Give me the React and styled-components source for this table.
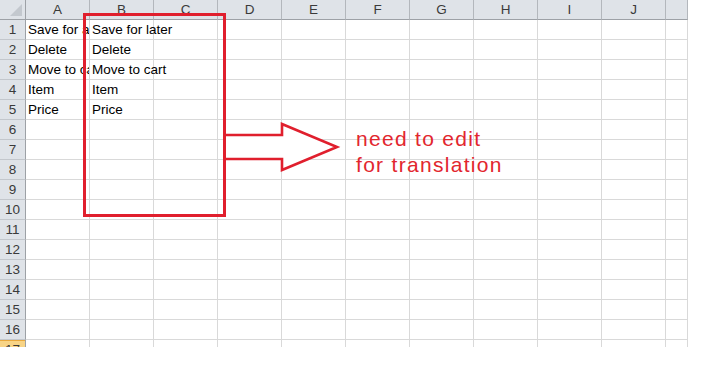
import React from 'react';
import styled, { createGlobalStyle } from 'styled-components';

const GlobalStyle = createGlobalStyle`
  html, body {
    margin: 0;
    background: #ffffff;
    font-family: "Liberation Sans", Arial, sans-serif;
  }
`;

const Page = styled.div`
  position: relative;
  width: 712px;
  height: 365px;
  overflow: hidden;
  background: #fff;
`;

const Sheet = styled.div`
  display: grid;
  grid-template-columns: 26px repeat(10, 64px) 22px;
  grid-auto-rows: 20px;
  width: 688px;
  height: 347px;
  overflow: hidden;
`;

const Corner = styled.div`
  position: relative;
  background: #dfe3e8;
  border-right: 1px solid #9da1a6;
  border-bottom: 1px solid #9da1a6;
  box-sizing: border-box;

  /* little select-all triangle */
  &::after {
    content: '';
    position: absolute;
    right: 3px;
    bottom: 3px;
    width: 0;
    height: 0;
    border-left: 12px solid transparent;
    border-bottom: 12px solid #c3c8ce;
  }
`;

const ColHeader = styled.div`
  background: #dfe3e8;
  border-right: 1px solid #b3b7bc;
  border-bottom: 1px solid #9da1a6;
  box-sizing: border-box;
  display: flex;
  align-items: center;
  justify-content: center;
  font-size: 13.5px;
  color: #3a3a3a;
`;

const RowHeader = styled.div`
  background: ${(p) => (p.$active ? '#f8d486' : '#dfe3e8')};
  box-shadow: ${(p) => (p.$active ? 'inset 0 1px 0 #eaa93c' : 'none')};
  border-right: 1px solid #9da1a6;
  border-bottom: 1px solid ${(p) => (p.$active ? '#eaa93c' : '#c3c7cc')};
  box-sizing: border-box;
  display: flex;
  align-items: center;
  justify-content: center;
  font-size: 13.5px;
  color: #3a3a3a;
`;

const Cell = styled.div`
  border-right: 1px solid #d9d9d9;
  border-bottom: 1px solid #d9d9d9;
  box-sizing: border-box;
  display: flex;
  align-items: flex-end;
  padding: 0 0 2px 2px;
  font-size: 13.5px;
  color: #000;
  white-space: nowrap;
  overflow: ${(p) => (p.$spill ? 'visible' : 'hidden')};
  position: relative;
  z-index: ${(p) => (p.$spill ? 1 : 0)};
`;

const RedFrame = styled.div`
  position: absolute;
  left: 83px;
  top: 13px;
  width: 143px;
  height: 204px;
  border: 3px solid #e01f2d;
  box-sizing: border-box;
  z-index: 2;
`;

const ArrowSvg = styled.svg`
  position: absolute;
  left: 0;
  top: 0;
  z-index: 2;
`;

const Note = styled.div`
  position: absolute;
  left: 356px;
  top: 126px;
  font-family: "Liberation Sans", Arial, sans-serif;
  font-size: 21px;
  line-height: 26px;
  letter-spacing: 1.3px;
  color: #e2262e;
  z-index: 2;
`;

const columns = ['A', 'B', 'C', 'D', 'E', 'F', 'G', 'H', 'I', 'J', ''];

const data = {
  1: ['Save for a', 'Save for later'],
  2: ['Delete', 'Delete'],
  3: ['Move to cart', 'Move to cart'],
  4: ['Item', 'Item'],
  5: ['Price', 'Price'],
};

function App() {
  const rows = Array.from({ length: 17 }, (_, i) => i + 1);

  return (
    <Page>
      <GlobalStyle />
      <Sheet>
        <Corner />
        {columns.map((c, i) => (
          <ColHeader key={'h' + i}>{c}</ColHeader>
        ))}
        {rows.map((r) => (
          <React.Fragment key={r}>
            <RowHeader $active={r === 17}>{r}</RowHeader>
            {columns.map((c, i) => {
              const vals = data[r] || [];
              return (
                <Cell key={c + i} $spill={i === 1}>
                  {vals[i] || ''}
                </Cell>
              );
            })}
          </React.Fragment>
        ))}
      </Sheet>

      <RedFrame />

      <ArrowSvg width="712" height="365" viewBox="0 0 712 365">
        <path
          d="M226 135 H282 V124 L337 147 L282 170 V159 H226"
          fill="#fff"
          stroke="#e01f2d"
          strokeWidth="2.6"
          strokeLinejoin="miter"
        />
      </ArrowSvg>

      <Note>
        need to edit
        <br />
        for translation
      </Note>
    </Page>
  );
}

export default App;
